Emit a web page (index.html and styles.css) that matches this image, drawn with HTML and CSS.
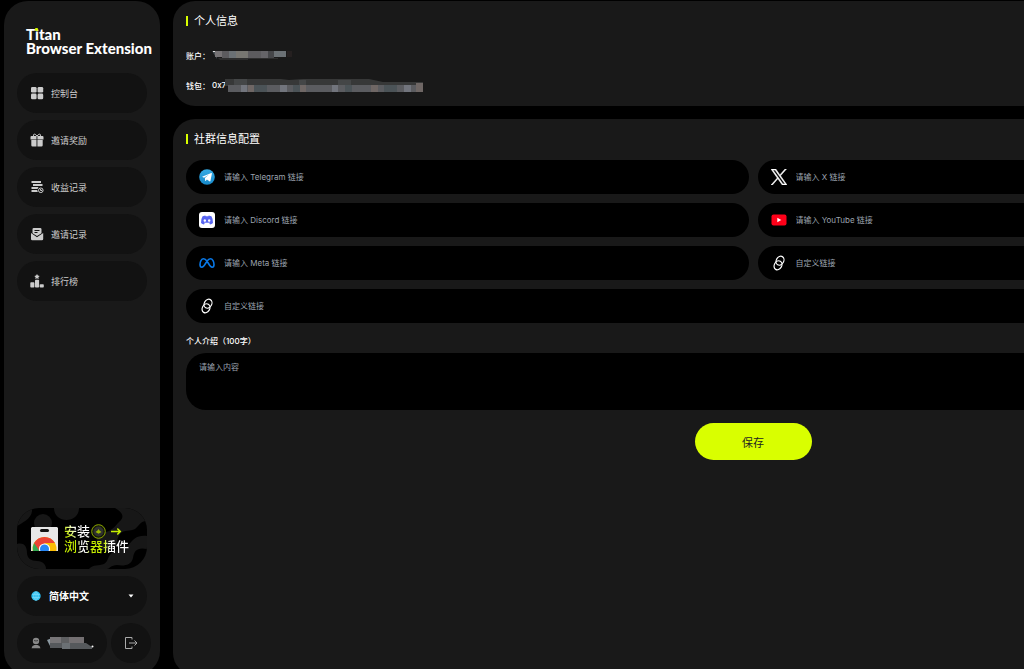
FILE: index.html
```html
<!DOCTYPE html>
<html lang="zh-CN">
<head>
    <meta charset="UTF-8">
    <meta name="viewport" content="width=device-width, initial-scale=1.0">
    <title>Titan Browser Extension</title>
    <link rel="stylesheet" href="styles.css">
</head>
<body>
<div class="app">
    <aside class="sidebar">
        <div class="logo">Titan<br>Browser Extension</div>

        <nav class="menu">
            <a class="menu-item" href="#">
                <svg class="menu-icon" viewBox="0 0 14 14"><rect x="1" y="1" width="5.6" height="5.6" rx="1.3"/><rect x="7.6" y="1" width="5.6" height="5.6" rx="1.3"/><rect x="1" y="7.6" width="5.6" height="5.6" rx="1.3"/><rect x="7.6" y="7.6" width="5.6" height="5.6" rx="1.3"/></svg>
                控制台
            </a>
            <a class="menu-item" href="#">
                <svg class="menu-icon" viewBox="0 0 14 14"><path d="M1.500 3h5v3.400h-6V4q0-1 1-1zM7.400 3h5.100q1 0 1 1v2.400H7.400zM1.300 7.100h5.200v6.400H2.600q-1.300 0-1.300-1.300zM7.400 7.100h5.300v5.100q0 1.300-1.300 1.300h-4z"/><path class="line" d="M6.900 3.200C5.500.200 2.500.800 3.700 3.200M7.100 3.200C8.500.200 11.500.800 10.300 3.200"/></svg>
                邀请奖励
            </a>
            <a class="menu-item" href="#">
                <svg class="menu-icon" viewBox="0 0 14 14"><path d="M1.500 1h9.500v2H1.500zM3 4h9.500v2H3zM1.500 7h7l-1 2h-6zM1.500 10h5.700l.6 2H1.500z"/><circle class="line" cx="10.800" cy="10.300" r="2.300"/><path class="line" d="M10.600 9v1.500h1.500"/></svg>
                收益记录
            </a>
            <a class="menu-item" href="#">
                <svg class="menu-icon" viewBox="0 0 14 14"><path fill-rule="evenodd" d="M3.800 1h6.400q1.300 0 1.300 1.300v4L7 9 2.500 6.300v-4Q2.500 1 3.800 1zM4.500 3v.9h5V3zM4.500 5v.9h3V5z"/><path d="M1 6l6 4.200L13.200 6v6q0 1.300-1.300 1.300H2.300Q1 13.300 1 12z"/></svg>
                邀请记录
            </a>
            <a class="menu-item" href="#">
                <svg class="menu-icon" viewBox="0 0 14 14"><path d="M7 0l.9 1.600 1.800.3-1.300 1.300.3 1.800L7 4.200 5.300 5l.3-1.800-1.300-1.300 1.800-.3z"/><rect x="5" y="5.800" width="4.100" height="7.700" rx=".8"/><rect x=".3" y="8.300" width="4.100" height="5.200" rx=".8"/><rect x="9.700" y="10.300" width="4.100" height="3.200" rx=".8"/></svg>
                排行榜
            </a>
        </nav>

        <div class="sidebar-bottom">
            <a class="promo" href="#">
                <svg class="promo-bg" viewBox="0 0 130 61" preserveAspectRatio="none"><path d="M0 0h15C16 9 9 13 0 18zM37 0h25c0 16-25 16-25 0z"/><circle cx="26" cy="15" r="9"/><path d="M0 36c8-2 10 4 10 9s4 8 10 8 9 4 9 8H0zM110 0h20v13c-7 0-8 5-12 8-5 3-11 0-15 5-5 7-1 10-7 15-5 4-11 1-15-3-4-6 1-13 8-14 7-2 9-6 13-10 6-5 4-9-4-14zM130 28v13c-10-2-13 2-14 9-2 8-10 8-16 7-6 0-8 4-10 4H72c4-5 10-3 15-5 5-3 3-8 9-12 5-4 11-1 15-6 5-7 9-11 19-10z"/></svg>
                <svg class="store" viewBox="0 0 27 24"><path fill="#e8e8e8" d="M1 0h25l1 1v23H0V1z"/><rect x="9" y="2" width="9" height="3" rx="1.500" fill="#111"/><circle cx="13.500" cy="22" r="12" fill="#fbbc04"/><path fill="#34a853" d="M13.500 22L3.100 16A12 12 0 0 0 2 24h11z"/><path fill="#ea4335" d="M3.100 16a12 12 0 0 1 20.800 0h-10L8.500 24z"/><circle cx="13.500" cy="22" r="5.600" fill="#fff"/><circle cx="13.500" cy="22" r="4.500" fill="#2787f5"/></svg>
                <div class="promo-text">
                    <div class="promo-line"><span class="fade-one">安装</span>
                        <svg class="coin" viewBox="0 0 15 15"><circle cx="7.500" cy="7.500" r="6.800" fill="#161a09" stroke="#8da800"/><circle cx="7.500" cy="7.500" r="5" fill="#303030"/><path d="M7.500 5l1 1.500L10.500 8l-3 1.700-3-1.700 2-1.500z" fill="#98b600"/></svg>
                        <svg class="arrow" viewBox="0 0 11 9"><path d="M0 4.500h9M6.300 1.500l3 3-3 3"/></svg>
                    </div>
                    <div class="promo-line"><span class="fade-two">浏览器插件</span></div>
                </div>
            </a>

            <div class="language">
                <svg class="globe" viewBox="0 0 10 10"><circle cx="5" cy="5" r="4.700" fill="#25bdf0"/><path d="M1 3.300h8M1 6.700h8M5 .5v9M5 .5C2 3 2 7 5 9.500 8 7 8 3 5 .5" fill="none" stroke="#a9eaff" stroke-width=".5"/></svg>
                <select class="language-select" aria-label="语言">
                    <option>简体中文</option>
                </select>
                <svg class="caret" viewBox="0 0 6 4"><path d="M.5.500h5L3 3.500z"/></svg>
            </div>

            <div class="account">
                <div class="user">
                    <svg class="user-icon" viewBox="0 0 10 12"><circle cx="5" cy="4" r="3.200"/><path d="M.5 11.300q.5-2.800 3-3.300h3q2.500.5 3 3.300z"/><path d="M3 3.500q2 1 4 0" fill="none" stroke="#222" stroke-width=".7"/></svg>
                    <svg class="user-mask" viewBox="0 0 48 14"><path fill="#8b98a0" d="M0 4l5-2v9l-2-1z"/><path fill="#777577" d="M3 1h11v7H3z"/><path fill="#5f6062" d="M14 1h8v7h-8z"/><path fill="#747072" d="M22 1h15v7H22z"/><path fill="#56595c" d="M3 7h12v5H3zM22 7h17l6 4v2H22z"/><path fill="#6b7074" d="M15 7h8v6h-8z"/><circle cx="45.500" cy="10.500" r="1" fill="#fff"/></svg>
                </div>
                <button class="logout" type="button" aria-label="退出">
                    <svg viewBox="0 0 14 14"><path d="M8 3.500v-2H1.500v11H8v-2M5 7h8M10.500 4.500L13 7l-2.500 2.500"/></svg>
                </button>
            </div>
        </div>
    </aside>

    <main class="content">
        <section class="panel">
            <h2 class="title">个人信息</h2>
            <div class="info">
                <span>账户：</span>
                <svg class="mask-short" viewBox="0 0 80 13"><path fill="#444c50" d="M0 2l5 1v7z"/><path fill="#e0e0e0" d="M1 2h5v1H1zM8 7h1v1H8z"/><path fill="#767375" d="M3 2h7v6H3z"/><path fill="#5c5b5e" d="M10 2h7v7h-7zM36 2h13v7H36z"/><path fill="#6b7175" d="M17 2h7v7h-7zM62 2h12v6H62z"/><path fill="#777671" d="M24 2h12v7H24z"/><path fill="#656468" d="M49 2h7v7h-7z"/><path fill="#454649" d="M56 2h6v7h-6z"/><path fill="#252020" d="M75 2h5v6h-5z"/><path fill="#2d2d2d" d="M6 9h60v1H36v1H8z"/></svg>
            </div>
            <div class="info">
                <span>钱包：</span>
                <span>0x7</span>
                <svg class="mask-long" viewBox="0 0 198 13"><path fill="#373838" d="M0 0h56l8 1 14-1h66l14 3h40v4H0z"/><path fill="#444647" d="M9 0h13v6H9zM74 1h7v5h-7zM113 1h13v5h-13z"/><path fill="#5b5c60" d="M3 6h195v7H3z"/><path fill="#72757d" d="M16 6h6v7h-6zM55 6h7v7h-7zM107 6h6v7h-6zM179 6h7v7h-7z"/><path fill="#6f6765" d="M23 6h6v7h-6zM75 6h6v7h-6zM146 6h7v7h-7zM191 4h7v9h-7z"/><path fill="#4b5357" d="M29 6h13v7H29zM68 6h7v7h-7zM120 6h7v7h-7zM159 6h13v7h-13z"/></svg>
            </div>
        </section>

        <section class="panel panel-main">
            <h2 class="title">社群信息配置</h2>
            <form class="form">
                <div class="fields">
                    <label class="field">
                        <svg class="field-icon" viewBox="0 0 16 16"><defs><linearGradient id="tg" x2="0" y2="1"><stop stop-color="#35abe5"/><stop offset="1" stop-color="#1789c9"/></linearGradient></defs><circle cx="8" cy="8" r="7.800" fill="url(#tg)"/><path fill="#fff" d="M3 7.800l9.300-3.700q.7-.2.6.6l-1.500 7.200q-.2.8-1 .4L7.900 10.600l-1.300 1.300-.4.100-.3-3L10 5.400 5 8.700z"/></svg>
                        <input class="field-input" type="text" placeholder="请输入 Telegram 链接" aria-label="Telegram">
                    </label>
                    <label class="field">
                        <svg class="field-icon" viewBox="0 0 24 24"><path fill="#fff" stroke="#fff" stroke-width=".8" d="M14.300 10.200L23.200 0h-2.100l-7.800 8.900L7.200 0H0l9.400 13.500L0 24h2.100l8.200-9.400 6.600 9.400H24zM2.900 1.600h3.200L21.200 22.400h-3.300z"/></svg>
                        <input class="field-input" type="text" placeholder="请输入 X 链接" aria-label="X">
                    </label>
                    <label class="field">
                        <svg class="field-icon" viewBox="0 0 16 16"><rect width="16" height="16" rx="3" fill="#fff"/><path fill="#5865f2" fill-rule="evenodd" d="M6.300 3.500l.4.700h2.600l.4-.7 2.700.8q1.800 2.800 1.600 6.700-1.400 1.200-3 1.500l-.7-1.200.8-.5H4.900l.8.5-.7 1.200q-1.600-.3-3-1.500Q1.800 7.100 3.600 4.300zM5.800 7.200a1.200 1.300 0 1 0 .01 0zM10.200 7.200a1.200 1.300 0 1 0 .01 0z"/></svg>
                        <input class="field-input" type="text" placeholder="请输入 Discord 链接" aria-label="Discord">
                    </label>
                    <label class="field">
                        <svg class="field-icon" viewBox="0 0 16 16"><rect x=".5" y="2.500" width="15" height="11" rx="2" fill="#ff0019"/><path fill="#fff" d="M6.300 5.800l4 2.200-4 2.200z"/></svg>
                        <input class="field-input" type="text" placeholder="请输入 YouTube 链接" aria-label="YouTube">
                    </label>
                    <label class="field">
                        <svg class="field-icon" viewBox="0 0 16 16"><path fill="none" stroke="#0878e8" stroke-width="1.600" d="M8 6.200C6.900 4.600 5.800 3.800 4.600 3.800 2.400 3.800 1 6.800 1 9.500c0 1.700.7 2.700 1.900 2.700 1.300 0 2.200-1.300 3.600-3.700L8 6.200c1.100-1.600 2.200-2.400 3.400-2.400C13.600 3.800 15 6.800 15 9.500c0 1.700-.7 2.700-1.900 2.700-1.300 0-2.200-1.300-3.600-3.700z"/></svg>
                        <input class="field-input" type="text" placeholder="请输入 Meta 链接" aria-label="Meta">
                    </label>
                    <label class="field">
                        <svg class="field-icon link" viewBox="0 0 16 16"><ellipse cx="9" cy="5.700" rx="3.700" ry="4.700" transform="rotate(30 9 5.700)"/><ellipse cx="7" cy="10.300" rx="3.700" ry="4.700" transform="rotate(30 7 10.300)"/></svg>
                        <input class="field-input" type="text" placeholder="自定义链接" aria-label="自定义链接">
                    </label>
                    <label class="field field-wide">
                        <svg class="field-icon link" viewBox="0 0 16 16"><ellipse cx="9" cy="5.700" rx="3.700" ry="4.700" transform="rotate(30 9 5.700)"/><ellipse cx="7" cy="10.300" rx="3.700" ry="4.700" transform="rotate(30 7 10.300)"/></svg>
                        <input class="field-input" type="text" placeholder="自定义链接" aria-label="自定义链接">
                    </label>
                </div>
                <label class="bio-label" for="bio">个人介绍（100字）</label>
                <textarea class="bio" id="bio" maxlength="100" placeholder="请输入内容"></textarea>
                <button class="save" type="button">保存</button>
            </form>
        </section>
    </main>
</div>
</body>
</html>
```
FILE: styles.css
```css
* { box-sizing: border-box; }
body { margin: 0; height: 100vh; overflow: hidden; background: #000; color: #fff; font-family: Inter, "Noto Sans CJK SC", sans-serif; font-size: 8px; }
input, textarea, button, select { font-family: inherit; border: 0; outline: 0; }
svg { display: block; flex: none; }
a { color: inherit; text-decoration: none; }

.app { display: flex; gap: 13px; min-height: calc(100vh + 6px); padding: 1px 4px 0; }

/* sidebar */
.sidebar { display: flex; flex-direction: column; flex: none; width: 156px; padding: 26px 13px 12px; border-radius: 24px; background: #191919; }
.logo { position: relative; padding-left: 9px; font: 900 15px/14px Lato, sans-serif; white-space: nowrap; }
/* green dot of the i */
.logo::after { content: ""; position: absolute; left: 18px; top: 1px; width: 3px; height: 3px; border-radius: 1px; background: #d4fa00; }
.menu { display: flex; flex-direction: column; gap: 7px; margin-top: 18px; }
.menu-item { display: flex; align-items: center; gap: 7px; height: 40px; padding-left: 13px; border-radius: 20px; background: #121212; color: #ccc; font-size: 9px; }
.menu-icon { width: 14px; height: 14px; fill: #ccc; }
.line { fill: none; stroke: #ccc; }

.sidebar-bottom { display: flex; flex-direction: column; gap: 7px; margin-top: auto; }
.promo { position: relative; display: flex; align-items: center; gap: 6px; height: 61px; padding-left: 14px; border-radius: 22px; background: #000; overflow: hidden; }
.promo-bg { position: absolute; inset: 0; width: 100%; height: 100%; fill: #171717; }
.store { position: relative; width: 27px; height: 24px; }
.promo-text { position: relative; font-size: 13px; font-weight: 500; line-height: 15px; white-space: nowrap; }
.promo-line { display: flex; align-items: center; }
.fade-one, .fade-two { color: transparent; background-clip: text; -webkit-background-clip: text; }
.fade-one { background-image: linear-gradient(60deg, #c6ee00 15%, #fff 50%); }
.fade-two { background-image: linear-gradient(90deg, #c6ee00 18%, #fff 26%, #eee 34%, #c6ee00 42%, #c6ee00 62%, #fff 70%); }
.coin { width: 15px; height: 15px; margin-left: 1px; }
.arrow { width: 11px; height: 9px; margin-left: 5px; fill: none; stroke: #c6ee00; stroke-width: 1.5; }

.language { display: flex; align-items: center; height: 40px; padding: 0 13px 0 14px; border-radius: 20px; background: #121212; }
.globe { width: 10px; height: 10px; }
.language-select { flex: 1; min-width: 0; padding: 0 0 0 8px; appearance: none; background: transparent; color: #fff; font-size: 10px; font-weight: 700; }
.caret { width: 6px; height: 4px; fill: #fff; }

.account { display: flex; gap: 4px; margin-right: -4px; }
.user { display: flex; flex: 1; align-items: center; gap: 6px; height: 40px; padding-left: 14px; border-radius: 20px; background: #121212; }
.user-icon { width: 10px; height: 12px; fill: #888; }
.user-mask { width: 48px; height: 14px; }
.logout { display: flex; align-items: center; justify-content: center; width: 40px; height: 40px; padding: 0; border-radius: 20px; background: #121212; }
.logout svg { width: 14px; height: 14px; fill: none; stroke: #aaa; }

/* content */
.content { display: flex; flex: 1; flex-direction: column; gap: 13px; min-width: 1160px; }
.panel { padding: 12px 13px 15px; border-radius: 22px; background: #191919; }
.panel-main { flex: 1; }
.title { display: flex; align-items: center; gap: 6px; margin: 0 0 20px; font-size: 11px; font-weight: 400; line-height: 16px; }
.title::before { content: ""; width: 2px; height: 10px; background: #d9ff00; }
.panel-main .title { margin-bottom: 13px; }
.info { display: flex; align-items: center; gap: 2px; height: 12px; font-weight: 500; }
.info + .info { margin-top: 18px; }
.mask-short { width: 80px; height: 13px; }
.mask-long { width: 198px; height: 13px; margin-left: -3px; }

.form { display: flex; flex-direction: column; }
.fields { display: grid; grid-template-columns: 1fr 1fr; gap: 9px; }
.field { display: flex; align-items: center; gap: 9px; height: 34px; padding: 0 13px; border-radius: 17px; background: #000; }
.field-wide { grid-column: 1 / 3; }
.field-icon { width: 16px; height: 16px; }
.link { fill: none; stroke: #fff; stroke-width: 1.2; }
.field-input { flex: 1; min-width: 0; padding: 0; background: transparent; color: #fff; font-size: 8px; }
::placeholder { color: #9ca3af; opacity: 1; }
.bio-label { margin: 12px 0 6px; font-weight: 500; line-height: 12px; }
.bio { height: 57px; padding: 8px 13px; border-radius: 20px; background: #000; color: #fff; font-size: 8px; line-height: 12px; resize: none; }
.save { align-self: center; width: 117px; height: 37px; margin-top: 13px; border-radius: 19px; background: #d9ff00; color: #222; font-size: 11px; }
```
